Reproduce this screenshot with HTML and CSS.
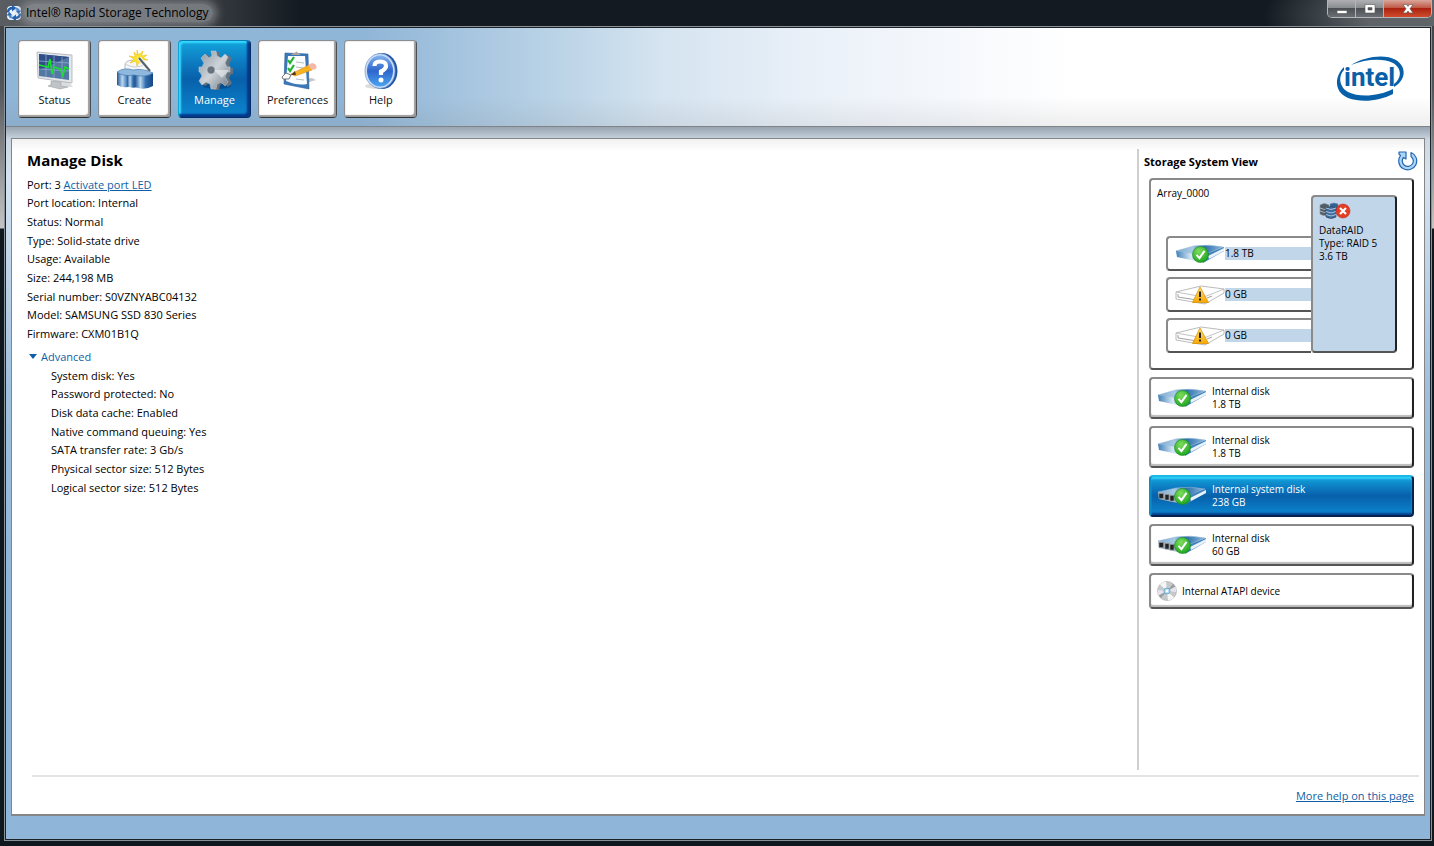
FILE: index.html
```html
<!DOCTYPE html>
<html lang="en">
<head>
    <meta charset="utf-8">
    <title>Intel® Rapid Storage Technology</title>
    <link rel="stylesheet" href="styles.css">
</head>
<body>
    <!-- Shared icons -->
    <svg class="sprite" aria-hidden="true">
        <defs>
            <linearGradient id="blueTop" x1="0" y1="0" x2="1" y2="0">
                <stop offset="0" stop-color="#7fa9cd"/>
                <stop offset="0.35" stop-color="#a9cae6"/>
                <stop offset="0.6" stop-color="#2d70ad"/>
                <stop offset="1" stop-color="#8fb8dc"/>
            </linearGradient>
            <linearGradient id="blueSide" x1="0" y1="0" x2="1" y2="0">
                <stop offset="0" stop-color="#3f7fb8"/>
                <stop offset="0.5" stop-color="#d7e7f4"/>
                <stop offset="1" stop-color="#5790c2"/>
            </linearGradient>
            <radialGradient id="green" cx="0.4" cy="0.3" r="0.8">
                <stop offset="0" stop-color="#7fdc5c"/>
                <stop offset="1" stop-color="#14a01c"/>
            </radialGradient>
            <linearGradient id="amber" x1="0" y1="0" x2="0" y2="1">
                <stop offset="0" stop-color="#ffe27a"/>
                <stop offset="1" stop-color="#f9a800"/>
            </linearGradient>
            <linearGradient id="drum" x1="0" y1="0" x2="1" y2="0">
                <stop offset="0" stop-color="#1d5596"/>
                <stop offset="0.3" stop-color="#b9d6ef"/>
                <stop offset="0.6" stop-color="#2e6cae"/>
                <stop offset="1" stop-color="#164681"/>
            </linearGradient>
            <linearGradient id="steel" x1="0" y1="0" x2="1" y2="1">
                <stop offset="0" stop-color="#8d98a3"/>
                <stop offset="0.5" stop-color="#cdd3d9"/>
                <stop offset="1" stop-color="#6c7883"/>
            </linearGradient>
        </defs>
        <symbol id="ok" viewBox="0 0 16 16">
            <circle cx="8" cy="8" r="7.5" fill="url(#green)" stroke="#148a1c" stroke-width="0.6"/>
            <path d="M4.2 8.4l2.8 3 4.8-6.8" fill="none" stroke="#fff" stroke-width="1.9"/>
        </symbol>
        <symbol id="drive" viewBox="0 0 50 22">
            <path d="M1 8L19 3Q34 1 48 4L31 11Q24 14 16 11Z" fill="url(#blueTop)" stroke="#8db4d4" stroke-width="0.6"/>
            <path d="M1 8L14 10Q24 13 31 11L28 19Q14 17 2 14Z" fill="url(#blueSide)"/>
            <path d="M31 11L49 4V8L28 20Z" fill="#3f81bb"/>
            <path d="M33 13L49 5V8L34 16Z" fill="#e8f2fa"/>
            <use href="#ok" x="17" y="3" width="17" height="17"/>
        </symbol>
        <symbol id="ssd" viewBox="0 0 50 22">
            <path d="M1 7L19 3Q34 1 48 4L31 11Q24 13 16 11Z" fill="url(#blueTop)" stroke="#8db4d4" stroke-width="0.6"/>
            <path d="M1 7L14 9Q24 12 31 11L28 19Q14 17 2 14Z" fill="#a5b6c6"/>
            <path d="M31 11L49 4V8L28 20Z" fill="#3f81bb"/>
            <path d="M33 13L49 5V8L34 16Z" fill="#e8f2fa"/>
            <path d="M2 8.500h4.500v5H2zM8 9.500h4v5.500H8zM13 10.500h4v5.500h-4z" fill="#222" stroke="#8c979f" stroke-width="0.700"/>
            <use href="#ok" x="17" y="3" width="17" height="17"/>
        </symbol>
        <symbol id="missing" viewBox="0 0 50 22">
            <path d="M1 8L26 2 49 5V9L30 20 1 15Z" fill="#fff" stroke="#aaa" stroke-width="0.800"/>
            <path d="M1 8L29 13 49 5M29 13L30 20" fill="none" stroke="#b4b4b4" stroke-width="0.800"/>
            <path d="M3 10v3l19 3M32 14l5-2" fill="none" stroke="#888" stroke-width="0.800"/>
            <path d="M25 3L33.500 18.500H17.500Z" fill="url(#amber)" stroke="#dc9208" stroke-width="0.800" stroke-linejoin="round"/>
            <path d="M25 7.500V13M25 14.500V16.500" stroke="#222" stroke-width="2" fill="none"/>
        </symbol>
    </svg>

    <div class="window">
        <div class="titlebar">
            <svg class="app-icon" viewBox="0 0 16 16" aria-hidden="true">
                <rect x="1" y="1" width="14" height="14" rx="4" fill="#eef4fb"/>
                <path d="M2 7.500Q2 3 7 3M14 8.500Q14 13 9 13" fill="none" stroke="#1f5fae" stroke-width="2.400"/>
                <path d="M6 0L10.500 3L6 6.500ZM10 9.500V16L5.500 13Z" fill="#1f5fae"/>
                <path d="M9.500 3.500Q12.500 3.500 12.500 6M6.500 12.500Q3.500 12.500 3.500 10" fill="none" stroke="#4a8ad0" stroke-width="2"/>
                <path d="M9.500 5.500H15.500L12.500 9ZM0.500 10.500H6.500L3.500 7Z" fill="#2a6cb9"/>
            </svg>
            <span class="title">Intel® Rapid Storage Technology</span>
            <div class="controls">
                <button class="minimize" aria-label="Minimize"><svg viewBox="0 0 12 12"><path d="M1 7.500h10v3H1z" fill="#fff" stroke="#555" stroke-width="0.600"/></svg></button>
                <button class="maximize" aria-label="Maximize"><svg viewBox="0 0 12 12"><path d="M1 1.500h10v8.500H1zM4 4.500v2.500h4V4.500z" fill="#fff" fill-rule="evenodd" stroke="#555" stroke-width="0.600"/></svg></button>
                <button class="close" aria-label="Close"><svg viewBox="0 0 12 12"><path d="M1 1.500h3.500L6 3.500l1.500-2H11L8 5.700l3 4.300H7.500L6 8l-1.500 2H1l3-4.300z" fill="#fff" stroke="#555" stroke-width="0.600"/></svg></button>
            </div>
        </div>

        <div class="client">
            <div class="header">
                <div class="toolbar">
                    <button class="tool">
                        <svg viewBox="0 0 40 40">
                            <path d="M14 36L38 37 34 32 18 31Z" fill="#ddd"/>
                            <path d="M2 2L37 5V33L3 28Z" fill="#e4e7ea" stroke="#a9afb5" stroke-width="0.800"/>
                            <path d="M4 4L34 7V30L4 26Z" fill="#5478a4"/>
                            <path d="M4 4L34 7 4 20Z" fill="#2f4d88"/>
                            <path d="M11 5V27M19 6V28M27 7V29M4 11L34 13M4 19L34 21" stroke="#8da9c9" stroke-width="0.800" fill="none"/>
                            <path d="M4 15L13 17 15 9 17 24 19 17 25 19 28 26 30 17 34 19" stroke="#18e02c" stroke-width="1.600" fill="none"/>
                            <path d="M16 31l10 1v4l7 1-8 2-12-3 3-1z" fill="#bfc4c8" stroke="#92989d" stroke-width="0.500"/>
                        </svg>
                        <span>Status</span>
                    </button>
                    <button class="tool">
                        <svg viewBox="0 0 40 40">
                            <path d="M10 21V14Q11 10 20 10Q29 10 31 14L33 24H10Z" fill="#f4f6f8" stroke="#a7b0b8" stroke-width="0.800"/>
                            <path d="M10 14Q20 20 31 14" fill="none" stroke="#bcc4ca" stroke-width="0.800"/>
                            <path d="M22 0l1.500 5L28 1l-1.500 5L32 5l-4 3 5 2-6 0 2 5-5-3-2 4-1-5-6 2 4-4-5-3 6 1-1-5 3 3z" fill="#ffe42e" stroke="#e9b500" stroke-width="0.500"/>
                            <path d="M24 8L35 21" stroke="#f5f5f5" stroke-width="4"/><path d="M24 8L35 21" stroke="#53616d" stroke-width="2"/>
                            <path d="M2 22V35Q7 38 13 37L20 34V21Z" fill="url(#drum)"/>
                            <path d="M12 25V36Q17 39 22 37V25Z" fill="url(#drum)"/>
                            <path d="M20 25V37Q29 41 38 36V23Z" fill="url(#drum)"/>
                            <path d="M2 22Q9 17 18 20Q28 18 38 23Q31 28 19 25Q8 27 2 22Z" fill="#8fb8de" stroke="#4379ae" stroke-width="0.700"/>
                        </svg>
                        <span>Create</span>
                    </button>
                    <button class="tool active">
                        <svg viewBox="0 0 40 40">
                            <ellipse cx="22" cy="36" rx="14" ry="3" fill="#073e78" opacity="0.600"/>
                            <g fill="#66727e" transform="translate(2 1)"><path d="M17 1h5l1 5 4 2 4-4 4 3-3 6 2 4h2v6h-2l-2 4 3 5-4 4-4-4-4 2-1 5h-5l-1-5-4-2-4 3-4-4 3-5-2-4H5v-6h2l2-4-3-5 4-4 4 4 3-2z"/></g>
                            <path fill-rule="evenodd" d="M16 1h5l1 5 4 2 4-4 3 3-3 6 2 4h3v5h-3l-2 5 3 5-3 4-4-4-4 2-1 5h-5l-1-5-4-2-4 3-3-4 3-5-2-4H4v-5h3l2-4-3-5 4-4 4 4 3-2zM16 16a4 4 0 1 0 .1 0z" fill="url(#steel)" stroke="#c5ccd2" stroke-width="0.500"/>
                            <path d="M19 20L34 20 27 28Z" fill="#eef1f3" opacity="0.600"/>
                        </svg>
                        <span>Manage</span>
                    </button>
                    <button class="tool">
                        <svg viewBox="0 0 40 40">
                            <path d="M22 35L38 30 34 28 25 29Z" fill="#c8c8c8"/>
                            <path d="M7 3L30 4 31 39 6 34Z" fill="#3b78b9" stroke="#2a5c97" stroke-width="0.600"/>
                            <path d="M10 6L27 6 29 34Q20 36 8 31Z" fill="#fafcff"/>
                            <path d="M13 5Q14 3 17 3Q18 0 20 3L23 5Z" fill="#aaa49c"/>
                            <path d="M18 12l8 1M18 17l7 1M18 29l8 1" stroke="#b7bcc0" fill="none"/>
                            <path d="M10 10l2 3 4-6M10 18l2 3 4-6" fill="none" stroke="#21b22f" stroke-width="2.200"/>
                            <path d="M4 27l4-4 5 2-2 4-6 0z" fill="#fff" stroke="#777"/>
                            <path d="M13 24L31 15 34 20 17 26Z" fill="#f8b323" stroke="#d99011" stroke-width="0.600"/>
                            <path d="M13 25L17 21 18 25Z" fill="#513824"/>
                            <path d="M30 15L34 13Q40 14 38 19L34 20Z" fill="#f6b8a6"/>
                        </svg>
                        <span>Preferences</span>
                    </button>
                    <button class="tool">
                        <svg viewBox="0 0 40 40">
                            <defs><linearGradient id="helpBlue" x1="0" y1="0" x2="0" y2="1"><stop offset="0" stop-color="#83b2ee"/><stop offset="0.500" stop-color="#2e66cc"/><stop offset="1" stop-color="#4aa5ef"/></linearGradient></defs>
                            <ellipse cx="17" cy="36" rx="13" ry="3" fill="#ddd"/>
                            <ellipse cx="21" cy="21" rx="15.500" ry="18" fill="#2455a8"/>
                            <ellipse cx="19" cy="21" rx="15" ry="17.500" fill="#c9ddf6" stroke="#6c93cf" stroke-width="0.700"/>
                            <ellipse cx="19" cy="21" rx="13" ry="15.500" fill="url(#helpBlue)"/>
                            <path d="M13.500 16Q13.500 11.500 19 11.500Q25 11.500 25 16Q25 19 20 21.500V25" stroke="#fff" stroke-width="4.200" fill="none"/>
                            <circle cx="20" cy="30" r="2.500" fill="#fff"/>
                        </svg>
                        <span>Help</span>
                    </button>
                </div>
                <svg class="logo" viewBox="0 0 70 47" role="img" aria-label="intel">
                    <path d="M15 10C30 1 49 -1 60 5C71 12 70 25 58 32V29C66 23 66 13 57 8C47 3 30 4 15 10Z" fill="#0860a8"/>
                    <path d="M8 12V15C2 21 3 32 12 37C24 43 43 41 57 34V39C43 46 26 48 12 43C-2 37 -2 22 8 12Z" fill="#0860a8"/>
                    <text x="8" y="31" class="logo-text">intel</text>
                </svg>
            </div>

            <div class="panel">
                <div class="columns">
                    <div class="main">
                        <h1>Manage Disk</h1>
                        <ul class="facts">
                            <li>Port: 3 <a href="#">Activate port LED</a></li>
                            <li>Port location: Internal</li>
                            <li>Status: Normal</li>
                            <li>Type: Solid-state drive</li>
                            <li>Usage: Available</li>
                            <li>Size: 244,198 MB</li>
                            <li>Serial number: S0VZNYABC04132</li>
                            <li>Model: SAMSUNG SSD 830 Series</li>
                            <li>Firmware: CXM01B1Q</li>
                        </ul>
                        <details class="advanced" open>
                            <summary>Advanced</summary>
                            <ul class="facts">
                                <li>System disk: Yes</li>
                                <li>Password protected: No</li>
                                <li>Disk data cache: Enabled</li>
                                <li>Native command queuing: Yes</li>
                                <li>SATA transfer rate: 3 Gb/s</li>
                                <li>Physical sector size: 512 Bytes</li>
                                <li>Logical sector size: 512 Bytes</li>
                            </ul>
                        </details>
                    </div>

                    <div class="storage">
                        <div class="storage-head">
                            <h2>Storage System View</h2>
                            <button class="refresh" aria-label="Refresh">
                                <svg viewBox="0 0 20 20"><path d="M13 1.500A9 9 0 1 1 2.500 4.500L1 3V1H8V8L5.500 6.500A5.500 5.500 0 1 0 13 5.500Z" fill="#a9d5f7" stroke="#2666b0" stroke-width="1.200" stroke-linejoin="round"/></svg>
                            </button>
                        </div>
                        <div class="cards">
                            <div class="card array">
                                <div class="members">
                                    <p class="array-name">Array_0000</p>
                                    <button class="card member"><svg><use href="#drive"/></svg><span>1.8 TB</span></button>
                                    <button class="card member"><svg><use href="#missing"/></svg><span>0 GB</span></button>
                                    <button class="card member"><svg><use href="#missing"/></svg><span>0 GB</span></button>
                                </div>
                                <button class="card volume">
                                    <svg viewBox="0 0 32 18">
                                        <path d="M1 3Q5 0 10 3V12Q5 15 1 12Z" fill="#525c66" stroke="#87919b" stroke-width="0.600"/>
                                        <path d="M1 6Q5 9 10 6M1 9Q5 12 10 9" stroke="#aab3bc" fill="none"/>
                                        <path d="M11 2Q15 0 19 2V10H11Z" fill="#33608f" stroke="#6b94bb" stroke-width="0.600"/>
                                        <path d="M7 6Q12 3 17 6V15Q12 18 7 15Z" fill="#3d6b9b" stroke="#253f5b" stroke-width="0.600"/>
                                        <path d="M7 6Q12 9 17 6M7 9.500Q12 12.500 17 9.500M7 12.500Q12 15.500 17 12.500" stroke="#a8c6e2" fill="none"/>
                                        <circle cx="24" cy="9" r="7" fill="#e33d25" stroke="#c12f1b" stroke-width="0.600"/>
                                        <path d="M21 6l6 6M27 6l-6 6" stroke="#fff" stroke-width="2.200"/>
                                    </svg>
                                    <span>DataRAID</span>
                                    <span>Type: RAID 5</span>
                                    <span>3.6 TB</span>
                                </button>
                            </div>
                            <button class="card disk"><svg><use href="#drive"/></svg><span>Internal disk<br>1.8 TB</span></button>
                            <button class="card disk"><svg><use href="#drive"/></svg><span>Internal disk<br>1.8 TB</span></button>
                            <button class="card disk selected"><svg><use href="#ssd"/></svg><span>Internal system disk<br>238 GB</span></button>
                            <button class="card disk"><svg><use href="#ssd"/></svg><span>Internal disk<br>60 GB</span></button>
                            <button class="card disk atapi">
                                <svg viewBox="0 0 20 20">
                                    <circle cx="10" cy="10" r="9.500" fill="#c6c9cb" stroke="#aaa" stroke-width="0.600"/>
                                    <path d="M10 10L3 3.500A9.500 9.500 0 0 1 9 .8ZM10 10L17 16.500A9.500 9.500 0 0 1 11 19.200Z" fill="#f6f6f6"/>
                                    <path d="M10 10L18.500 6A9 9 0 0 1 19.200 11ZM10 10L1.500 14A9 9 0 0 1 .8 9Z" fill="#e9e3ef"/>
                                    <path d="M10 10L16 3A9 9 0 0 1 18 5.500ZM10 10L4 17A9 9 0 0 1 2 14.500Z" fill="#989da1"/>
                                    <circle cx="10" cy="10" r="3" fill="#b8dcf0" stroke="#69a9d0"/>
                                    <circle cx="10" cy="10" r="1.200" fill="#fff"/>
                                </svg>
                                <span>Internal ATAPI device</span>
                            </button>
                        </div>
                    </div>
                </div>
                <div class="footer">
                    <a href="#">More help on this page</a>
                </div>
            </div>
        </div>
    </div>
</body>
</html>
```
FILE: styles.css
```css
* {
    box-sizing: border-box;
}

body {
    margin: 0;
    font-family: "Open Sans", "Noto Sans", sans-serif;
    font-size: 11px;
    color: #000;
}

button {
    font: inherit;
    color: inherit;
    margin: 0;
    padding: 0;
    border: none;
    background: none;
    cursor: pointer;
}

a {
    color: #0e5fa6;
}

h1, h2, p, ul {
    margin: 0;
    padding: 0;
}

svg {
    display: block;
    flex: none;
}

.sprite {
    position: absolute;
    width: 0;
    height: 0;
}

/* Window frame */
.window {
    min-height: 100vh;
    display: flex;
    flex-direction: column;
    padding: 0 2px 5px 4px;
    background: linear-gradient(#3a3e42 0, #55585b 90px, #c4c4c4 228px, #10181f 229px);
}

.titlebar {
    display: flex;
    align-items: center;
    height: 26px;
    margin: 0 -2px 0 -4px;
    padding-left: 6px;
    background: radial-gradient(ellipse 170px 60px at 100% 60%, #5d6367 40%, transparent), linear-gradient(90deg, #5a5e62 0, #33383d 220px, #131a21 300px);
}

.app-icon {
    width: 16px;
    height: 16px;
}

.title {
    margin-left: 2px;
    padding: 0 4px 0 2px;
    font-size: 12px;
    line-height: 18px;
    border-radius: 9px;
    background: rgba(150, 154, 158, 0.65);
    box-shadow: 0 0 8px 4px rgba(150, 154, 158, 0.65);
}

.controls {
    display: flex;
    align-self: flex-start;
    height: 18px;
    margin-left: auto;
    margin-right: 2px;
    border: 1px solid #b3b6b9;
    border-top: none;
    border-radius: 0 0 5px 5px;
    overflow: hidden;
}

.controls button {
    display: flex;
    justify-content: center;
    align-items: center;
    width: 28px;
    background: linear-gradient(#aeb0b3 0, #8a8d90 45%, #4a4d52 46%, #6b6e72 100%);
    border-right: 1px solid #b3b6b9;
}

.controls .close {
    width: 47px;
    border-right: none;
    background: linear-gradient(#d9a79c 0, #c05a47 45%, #a81f0d 46%, #cf4b2c 100%);
}

.controls svg {
    width: 12px;
    height: 12px;
}

.client {
    flex: 1;
    display: flex;
    flex-direction: column;
    border: 1px solid #8a9197;
    outline: 1px solid #1b2127;
    outline-offset: -2px;
    padding: 1px;
    background: linear-gradient(#98a5b1 100px, #cbd8e4 113px, #d5e3f0 150px, #9fc0de 360px, #8fb6d8 550px);
}

/* Header */
.header {
    display: flex;
    justify-content: space-between;
    align-items: flex-start;
    padding: 12px 24px 8px 12px;
    border-bottom: 1px solid #808488;
    background: linear-gradient(transparent 70%, rgba(120, 120, 120, 0.12)), linear-gradient(90deg, #8fb5d7 25%, #bcd4e7 39%, #d5e4f0 46%, #ebf1f9 57%, #fff 75%);
}

.toolbar {
    display: flex;
    gap: 7px;
}

.tool {
    display: flex;
    flex-direction: column;
    align-items: center;
    min-width: 73px;
    height: 78px;
    padding: 9px 8px 0;
    border: 1px solid #8b8e91;
    border-right-color: #4c4f52;
    border-bottom-color: #333;
    border-radius: 4px;
    line-height: 16px;
    color: #111;
    background: #fff;
    box-shadow: inset -2px -2px 1px #9c9c9c, inset 1px 1px 1px #eee;
}

.tool svg {
    width: 40px;
    height: 40px;
    margin-bottom: 2px;
}

.tool.active, .disk.selected {
    color: #fff;
    background: linear-gradient(#12a4dc 0, #0d7fc4 25%, #0860aa 50%, #0b87d0 100%);
}

.tool.active {
    border-color: #0a7cb5 #062c66 #062c66 #0aa6d8;
    box-shadow: inset -3px -3px 2px #04388a, inset 2px 2px 2px #38dcff;
}

.logo {
    width: 70px;
    height: 47px;
    margin-top: 15px;
}

.logo-text {
    font-family: Roboto, sans-serif;
    font-size: 26px;
    font-weight: 700;
    fill: #0860a8;
}

/* Content panel */
.panel {
    flex: 1;
    display: flex;
    flex-direction: column;
    margin: 11px 5px 23px;
    border: 1px solid #858585;
    border-bottom-width: 2px;
    background: linear-gradient(#f1f1f1, #fff 12px);
}

.columns {
    flex: 1;
    display: flex;
    padding: 10px 6px 5px 15px;
}

.main {
    flex: 1;
}

h1 {
    font-size: 15px;
    line-height: 22px;
    margin-bottom: 4px;
}

.facts {
    list-style: none;
    line-height: 19px;
}

.facts li:nth-child(3n+2) {
    line-height: 18px;
}

.advanced {
    margin-top: 4px;
}

.advanced summary {
    display: flex;
    align-items: center;
    gap: 4px;
    padding-left: 2px;
    line-height: 19px;
    color: #0e5fa6;
    cursor: pointer;
}

.advanced summary::before {
    content: "";
    border: 4px solid transparent;
    border-top: 5px solid #0e5fa6;
    border-bottom: none;
}

.advanced .facts {
    padding-left: 24px;
}

/* Storage system view */
.storage {
    width: 281px;
    padding-left: 5px;
    border-left: 2px solid #cfcfcf;
}

.storage-head {
    display: flex;
    justify-content: space-between;
    align-items: center;
    height: 24px;
}

h2 {
    font-size: 11px;
}

.refresh svg {
    width: 20px;
    height: 20px;
}

.cards {
    display: flex;
    flex-direction: column;
    gap: 7px;
    padding: 5px 4px 0 5px;
    font-size: 10px;
    line-height: 13px;
}

.card {
    text-align: left;
    border: 2px solid #8a8a8a;
    border-right-color: #222;
    border-bottom-color: #555;
    border-radius: 4px;
    background: #fff;
}

.array {
    display: flex;
    padding: 15px;
}

.members {
    flex: 1;
    display: flex;
    flex-direction: column;
    gap: 6px;
}

.array-name {
    flex: 1;
    margin: -8px 0 0 -9px;
}

.member {
    display: flex;
    align-items: center;
    height: 35px;
    padding-left: 7px;
    border-right: none;
    border-radius: 4px 0 0 4px;
}

.member span {
    flex: 1;
    background: #c2d6ea;
}

.member svg, .disk svg {
    width: 50px;
    height: 22px;
}

.volume {
    display: flex;
    flex-direction: column;
    width: 86px;
    min-height: 158px;
    padding: 5px 6px;
    background: #c2d6ea;
}

.volume svg {
    width: 32px;
    height: 18px;
    margin-bottom: 4px;
}

.disk {
    display: flex;
    align-items: center;
    gap: 5px;
    height: 42px;
    padding-left: 6px;
    box-shadow: inset 0 -2px 1px #bbb;
}

.disk.selected {
    border-color: #1bb9e6 #06224f #06224f #0a8cc4;
    box-shadow: inset 0 2px 2px #30d0fa, inset 0 -2px 2px #053f8c;
}

.disk.atapi {
    height: 36px;
}

.disk.atapi svg {
    width: 20px;
    height: 20px;
}

/* Footer */
.footer {
    margin: 0 5px 0 20px;
    padding: 10px 5px 9px;
    border-top: 2px solid #e4e4e4;
    text-align: right;
    line-height: 18px;
}
```
